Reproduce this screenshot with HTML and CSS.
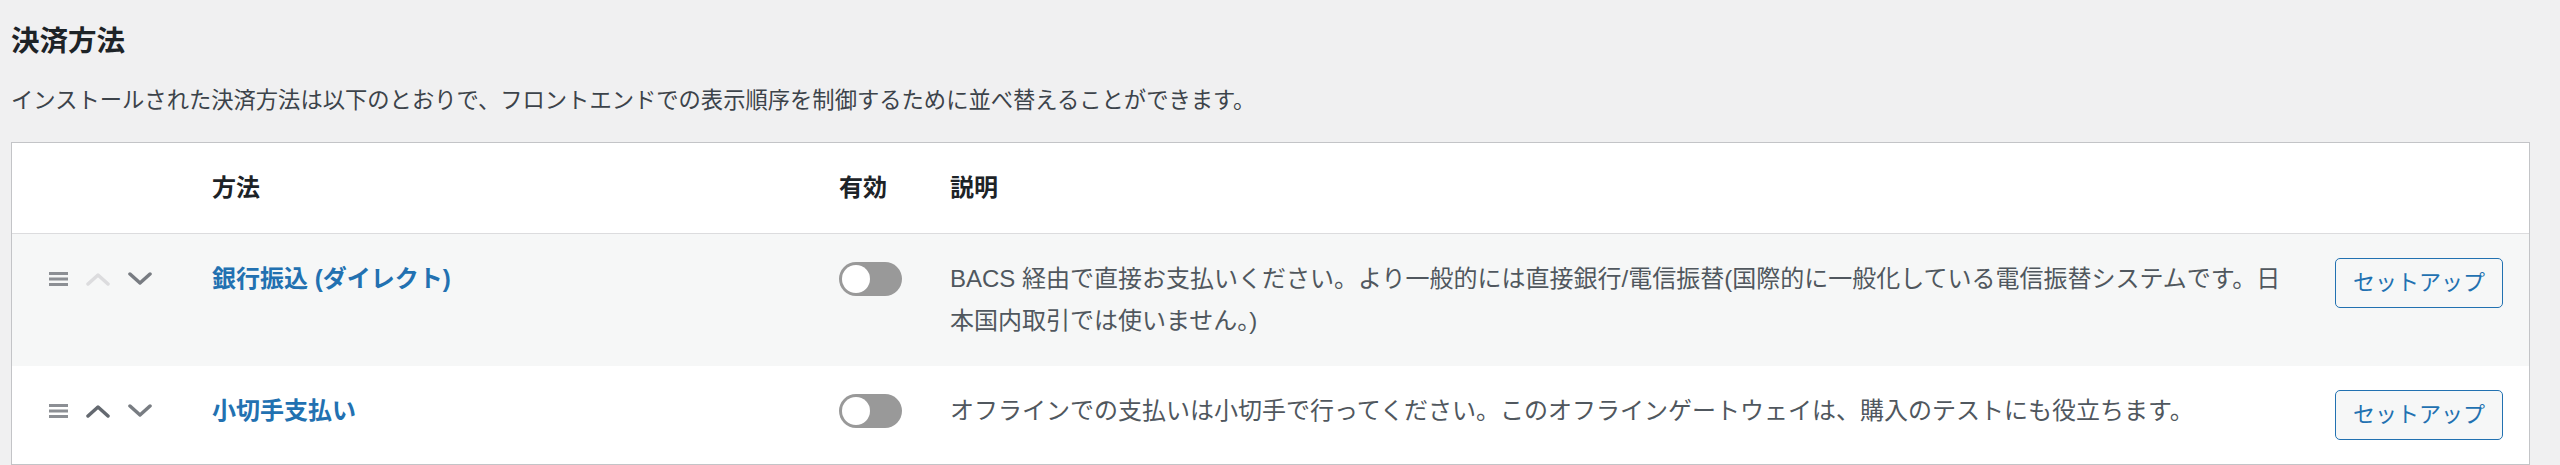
FILE: index.html
```html
<!DOCTYPE html>
<html lang="ja">

<head>
  <meta charset="UTF-8" />
  <title>決済方法</title>

  <link rel="stylesheet" href="styles.css">
</head>

<body>
  <div class="wrap">
    <h2 class="title">決済方法</h2>
    <p class="lead">インストールされた決済方法は以下のとおりで、フロントエンドでの表示順序を制御するために並べ替えることができます。</p>

    <div class="gateways">
      <div class="row head">
        <div class="cell"></div>
        <div class="cell">方法</div>
        <div class="cell">有効</div>
        <div class="cell">説明</div>
        <div class="cell"></div>
      </div>

      <div class="row alt">
        <div class="cell sort">
          <svg class="handle" width="19" height="14" viewBox="0 0 19 14"><rect y="0" width="19" height="3" /><rect y="5.5" width="19" height="3" /><rect y="11" width="19" height="3" /></svg>
          <svg class="arrow off" width="24" height="14" viewBox="0 0 24 14"><polyline points="2,12 12,3 22,12" /></svg>
          <svg class="arrow" width="24" height="14" viewBox="0 0 24 14"><polyline points="2,2 12,11 22,2" /></svg>
        </div>
        <div class="cell name"><a href="#">銀行振込 (ダイレクト)</a></div>
        <div class="cell"><span class="toggle"></span></div>
        <div class="cell desc">BACS 経由で直接お支払いください。より一般的には直接銀行/電信振替(国際的に一般化している電信振替システムです。日本国内取引では使いません。)</div>
        <div class="cell action"><a class="button" href="#">セットアップ</a></div>
      </div>

      <div class="row">
        <div class="cell sort">
          <svg class="handle" width="19" height="14" viewBox="0 0 19 14"><rect y="0" width="19" height="3" /><rect y="5.5" width="19" height="3" /><rect y="11" width="19" height="3" /></svg>
          <svg class="arrow up" width="24" height="14" viewBox="0 0 24 14"><polyline points="2,12 12,3 22,12" /></svg>
          <svg class="arrow" width="24" height="14" viewBox="0 0 24 14"><polyline points="2,2 12,11 22,2" /></svg>
        </div>
        <div class="cell name"><a href="#">小切手支払い</a></div>
        <div class="cell"><span class="toggle"></span></div>
        <div class="cell desc">オフラインでの支払いは小切手で行ってください。このオフラインゲートウェイは、購入のテストにも役立ちます。</div>
        <div class="cell action"><a class="button" href="#">セットアップ</a></div>
      </div>
    </div>
  </div>
</body>

</html>
```

FILE: styles.css
```css
body {
  margin: 0;
  background-color: #f0f0f1;
  font-family: "Liberation Sans", "Noto Sans CJK JP", sans-serif;
  color: #3c434a;
}

.wrap {
  padding: 23px 30px 0 11px;
}

.title {
  margin: 0;
  font-size: 28.5px;
  line-height: 36px;
  font-weight: 700;
  color: #1d2327;
}

.lead {
  margin: 25px 0 25px 0;
  font-size: 22.3px;
  line-height: 33px;
}

.gateways {
  background-color: #fff;
  border: 1px solid #c3c4c7;
}

.row {
  display: grid;
  grid-template-columns: 200px 627px 111px 1fr 194px;
  font-size: 24px;
  line-height: 42px;
}

.row.head {
  border-bottom: 1px solid #dcdcde;
  font-weight: 700;
  color: #1d2327;
}

.row.alt {
  background-color: #f6f7f7;
}

.cell {
  padding: 24px 0;
}

.sort {
  display: flex;
  align-items: center;
  align-self: start;
  height: 42px;
  padding-left: 37px;
  gap: 18px;
}

.handle {
  fill: #8c8f94;
}

.arrow {
  fill: none;
  stroke: #787c82;
  stroke-width: 3.5;
  stroke-linecap: round;
  stroke-linejoin: round;
}

.arrow.off {
  stroke: #dcdcde;
}

.arrow.up {
  stroke: #646970;
}

.name a {
  color: #2271b1;
  font-weight: 700;
  text-decoration: none;
}

.toggle {
  display: inline-block;
  position: relative;
  width: 63px;
  height: 34px;
  margin-top: 4px;
  border-radius: 17px;
  background-color: #999;
  vertical-align: top;
}

.toggle::after {
  content: "";
  position: absolute;
  left: 3px;
  top: 3px;
  width: 28px;
  height: 28px;
  border-radius: 50%;
  background-color: #fff;
}

.desc {
  padding-right: 40px;
  color: #50575e;
}

.action {
  padding-right: 25px;
}

.button {
  display: inline-block;
  box-sizing: border-box;
  height: 50px;
  padding: 0 17px;
  border: 1px solid #2271b1;
  border-radius: 5px;
  background-color: #f6f7f7;
  color: #2271b1;
  font-size: 22px;
  line-height: 48px;
  text-decoration: none;
  vertical-align: top;
}
```
